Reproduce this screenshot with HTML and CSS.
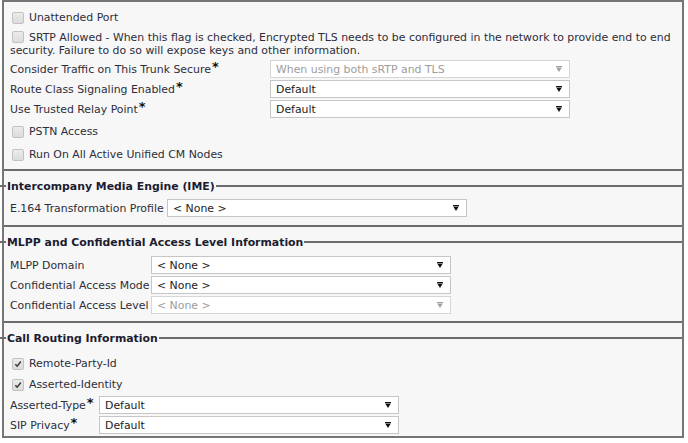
FILE: index.html
```html
<!DOCTYPE html>
<html lang="en">
<head>
  <meta charset="UTF-8">
  <title>SIP Trunk Configuration</title>
  <link rel="stylesheet" href="styles.css">
</head>
<body>
  <div class="panel">

    <div class="fs fs-top">
      <label class="check"><span class="box"></span>Unattended Port</label>
      <p class="check-note"><span class="box"></span>SRTP Allowed - When this flag is checked, Encrypted TLS needs to be configured in the network to provide end to end<br>security. Failure to do so will expose keys and other information.</p>
      <div class="rows rows-top">
        <div class="row">
          <span class="lbl">Consider Traffic on This Trunk Secure<sup class="req">*</sup></span>
          <div class="select disabled"><span>When using both sRTP and TLS</span><svg class="caret" viewBox="0 0 7 7"><path d="M0 0h7v1.4H0zM0.4 2h6.2L3.5 7z"/></svg></div>
        </div>
        <div class="row">
          <span class="lbl">Route Class Signaling Enabled<sup class="req">*</sup></span>
          <div class="select"><span>Default</span><svg class="caret" viewBox="0 0 7 7"><path d="M0 0h7v1.4H0zM0.4 2h6.2L3.5 7z"/></svg></div>
        </div>
        <div class="row">
          <span class="lbl">Use Trusted Relay Point<sup class="req">*</sup></span>
          <div class="select"><span>Default</span><svg class="caret" viewBox="0 0 7 7"><path d="M0 0h7v1.4H0zM0.4 2h6.2L3.5 7z"/></svg></div>
        </div>
      </div>
      <label class="check gap"><span class="box"></span>PSTN Access</label>
      <label class="check gap"><span class="box"></span>Run On All Active Unified CM Nodes</label>
    </div>

    <div class="fs fs-ime">
      <div class="legend"><span>Intercompany Media Engine (IME)</span></div>
      <div class="rows">
        <div class="row">
          <span class="lbl">E.164 Transformation Profile</span>
          <div class="select"><span>&lt; None &gt;</span><svg class="caret" viewBox="0 0 7 7"><path d="M0 0h7v1.4H0zM0.4 2h6.2L3.5 7z"/></svg></div>
        </div>
      </div>
    </div>

    <div class="fs fs-mlpp">
      <div class="legend"><span>MLPP and Confidential Access Level Information</span></div>
      <div class="rows">
        <div class="row">
          <span class="lbl">MLPP Domain</span>
          <div class="select"><span>&lt; None &gt;</span><svg class="caret" viewBox="0 0 7 7"><path d="M0 0h7v1.4H0zM0.4 2h6.2L3.5 7z"/></svg></div>
        </div>
        <div class="row">
          <span class="lbl">Confidential Access Mode</span>
          <div class="select"><span>&lt; None &gt;</span><svg class="caret" viewBox="0 0 7 7"><path d="M0 0h7v1.4H0zM0.4 2h6.2L3.5 7z"/></svg></div>
        </div>
        <div class="row">
          <span class="lbl">Confidential Access Level</span>
          <div class="select disabled"><span>&lt; None &gt;</span><svg class="caret" viewBox="0 0 7 7"><path d="M0 0h7v1.4H0zM0.4 2h6.2L3.5 7z"/></svg></div>
        </div>
      </div>
    </div>

    <div class="fs fs-call">
      <div class="legend"><span>Call Routing Information</span></div>
      <label class="check first"><span class="box checked"><svg viewBox="0 0 12 12"><path d="M2.8 6.2L5 8.6L9.4 3"/></svg></span>Remote-Party-Id</label>
      <label class="check"><span class="box checked"><svg viewBox="0 0 12 12"><path d="M2.8 6.2L5 8.6L9.4 3"/></svg></span>Asserted-Identity</label>
      <div class="rows rows-call">
        <div class="row">
          <span class="lbl">Asserted-Type<sup class="req">*</sup></span>
          <div class="select"><span>Default</span><svg class="caret" viewBox="0 0 7 7"><path d="M0 0h7v1.4H0zM0.4 2h6.2L3.5 7z"/></svg></div>
        </div>
        <div class="row">
          <span class="lbl">SIP Privacy<sup class="req">*</sup></span>
          <div class="select"><span>Default</span><svg class="caret" viewBox="0 0 7 7"><path d="M0 0h7v1.4H0zM0.4 2h6.2L3.5 7z"/></svg></div>
        </div>
      </div>
    </div>

  </div>
</body>
</html>
```

FILE: styles.css
```css
body {
  margin: 0;
  background: #fff;
  font-family: "DejaVu Sans", sans-serif;
  font-size: 10.9px;
  color: #2d2d3a;
}
.panel {
  width: 678px;
  margin-left: 2px;
  border: 2px solid #767676;
  background: #f7f7f7;
}
.fs {
  padding: 0 6px;
  border-bottom: 2px solid #6c6c6c;
}
.fs:last-child {
  border-bottom: none;
}
.fs-top {
  padding: 5px 6px 4px;
}
.fs-ime {
  padding-bottom: 8px;
}
.fs-mlpp {
  padding-bottom: 7px;
}
.fs-call {
  padding-bottom: 2px;
}
.legend {
  display: flex;
  align-items: center;
  height: 14px;
  margin: 8px -6px 0 -10px;
  font-weight: bold;
  color: #1c1c30;
}
.legend::before,
.legend::after {
  content: "";
  border-top: 2px solid #6c6c6c;
}
.legend::before {
  width: 6px;
}
.legend::after {
  flex: 1;
}
.legend span {
  padding: 0 1px;
}
.check {
  display: flex;
  align-items: center;
  height: 21px;
}
.check.gap {
  margin-top: 2px;
}
.check.first {
  margin-top: 8px;
}
.box {
  display: inline-block;
  box-sizing: border-box;
  width: 12px;
  height: 12px;
  margin: 0 5px 0 2px;
  border: 1px solid #c2c2c2;
  border-radius: 2px;
  background: linear-gradient(#ebebeb, #dcdcdc);
}
.box svg {
  display: block;
  width: 10px;
  height: 10px;
}
.box svg path {
  fill: none;
  stroke: #3a3a3a;
  stroke-width: 1.8;
}
.check-note {
  margin: 3px 0 0;
  line-height: 13px;
  white-space: nowrap;
}
.check-note .box {
  vertical-align: -2px;
}
.rows {
  display: flex;
  flex-direction: column;
  gap: 2px;
  margin-top: 6px;
}
.rows-top {
  gap: 0;
  margin-top: 2px;
}
.rows-top .row {
  height: 20px;
}
.fs-mlpp .rows {
  margin-top: 7px;
}
.rows-call {
  margin-top: 1px;
}
.row {
  display: flex;
  align-items: center;
  height: 18px;
}
.lbl {
  flex: none;
  white-space: nowrap;
}
.fs-top .lbl { width: 260px; }
.fs-ime .lbl { width: 157px; }
.fs-mlpp .lbl { width: 141px; }
.fs-call .lbl { width: 89px; }
.req {
  font-size: 13px;
  font-weight: bold;
  color: #111;
  line-height: 0;
  vertical-align: 2px;
  margin-left: 1px;
}
.select {
  display: flex;
  align-items: center;
  justify-content: space-between;
  box-sizing: border-box;
  width: 300px;
  height: 18px;
  padding: 0 7px 0 5px;
  border: 1px solid #c6c6c6;
  background: #fff;
  color: #222;
}
.caret {
  width: 6px;
  height: 6px;
  fill: #111;
}
.select.disabled {
  border-color: #d6d6d6;
  color: #9c9c9c;
}
.select.disabled .caret {
  fill: #a0a0a0;
}
```
